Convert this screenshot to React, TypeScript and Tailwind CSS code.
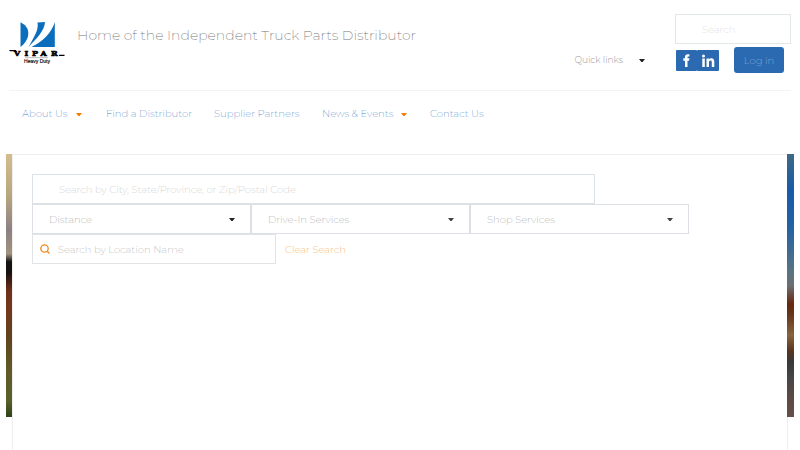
import React, { useState } from 'react';

const navItems = [
  { label: 'About Us', width: 'w-[60px]', menu: true },
  { label: 'Find a Distributor', width: 'w-[84px]', menu: false },
  { label: 'Supplier Partners', width: 'w-[84px]', menu: false },
  { label: 'News & Events', width: 'w-[84px]', menu: true },
  { label: 'Contact Us', width: 'w-[60px]', menu: false },
];

const Caret = ({ className }: { className?: string }) => (
  <svg viewBox="0 0 6 3" className={`shrink-0 w-[6px] h-[3px] ${className ?? ''}`} fill="currentColor" aria-hidden="true">
    <path d="M0 0h6L3.600 3H2.400z" />
  </svg>
);

const Logo = () => (
  <svg viewBox="0 0 56 42" className="w-14 h-[42px] block" role="img" aria-label="VIPAR Heavy Duty">
    <path d="M11.500 0.200C16 2.500 19.300 6 19.300 11C19.300 16.500 16.500 21 11.500 25z" fill="#0a6ebd" />
    <path d="M36 0C35.500 9 27.500 16.500 19.500 25C25 15 30 8 28.500 0.500z" fill="#0a6ebd" />
    <path d="M45.800 0V25H22.500C34 19.500 42.500 11 45.800 0z" fill="#0a6ebd" />
    <text x="5 15.500 23 31.500 42" y="34" fontFamily="'DejaVu Serif', 'Liberation Serif', serif" fontWeight="700" fontSize="8" stroke="#000" strokeWidth="0.700">
      VIPAR
    </text>
    {/* slab serifs that run past the lettering */}
    <path d="M0 28h7v1.300H1zM50 32.800h5.500v1.300H50z" fill="#000" />
    <path d="M16 35.600h23v0.500H16z" fill="#777" />
    <text x="28" y="41" textAnchor="middle" fontFamily="'Liberation Sans', sans-serif" fontSize="5" stroke="#000" strokeWidth="0.150">
      Heavy Duty
    </text>
  </svg>
);

interface DropdownProps {
  id: string;
  label: string;
  options: string[];
  caret: string;
}

const Dropdown = ({ id, label, options, caret }: DropdownProps) => (
  <div className="relative w-[219px]">
    <select
      id={id}
      aria-label={label}
      defaultValue=""
      className="appearance-none w-full h-[30px] border border-[#dcdfe3] bg-white px-4 text-[10px] font-extralight text-[#999]"
    >
      <option value="">{label}</option>
      {options.map((option) => (
        <option key={option}>{option}</option>
      ))}
    </select>
    <Caret className={`absolute right-4 top-[14px] pointer-events-none ${caret}`} />
  </div>
);

const Header = () => (
  <header className="mx-[9px] border-b border-[#f3f3f3] h-[91px] flex pt-[14px]">
    <a href="#" className="mt-2">
      <Logo />
    </a>
    <p className="ml-3 mt-[11px] text-[14px] leading-5 font-extralight text-[#777] whitespace-nowrap">
      Home of the Independent Truck Parts Distributor
    </p>
    <div className="ml-auto flex flex-col items-end">
      <input
        type="search"
        aria-label="Search"
        placeholder="Search"
        className="w-[116px] h-[30px] border border-[#e2e7e9] px-[26px] text-[10px] font-extralight placeholder:text-[#d4d4d4]"
      />
      <div className="flex items-center mt-[3px] pr-[7px]">
        <button type="button" className="flex items-center gap-4 mr-[31px] text-[9px] font-light text-[#999] whitespace-nowrap">
          Quick links
          <Caret className="text-[#222]" />
        </button>
        <a href="#" aria-label="Facebook">
          <svg viewBox="0 0 21 21" className="w-[21px] h-[21px]">
            <rect width="21" height="21" rx="1" fill="#2b69b1" />
            <path d="M9 17v-6.300H7.300V8.200H9V6.900C9 5 10 4.200 11.700 4.200h1.700v2.300h-1c-.7 0-.9.3-.9.900v.8h1.900l-.3 2.500h-1.600V17z" fill="#fff" />
          </svg>
        </a>
        <a href="#" aria-label="LinkedIn">
          <svg viewBox="0 0 22 21" className="w-[22px] h-[21px]">
            <rect width="22" height="21" rx="1" fill="#2b69b1" />
            <circle cx="6.500" cy="6" r="1.500" fill="#fff" />
            <path d="M5.300 8.500h2.500V17H5.300zM9.500 8.500h2.400v1.200c.5-.9 1.400-1.400 2.500-1.400 2 0 2.900 1.300 2.900 3.500V17h-2.500v-4.700c0-1.200-.4-1.800-1.300-1.800s-1.500.7-1.500 1.900V17H9.500z" fill="#fff" />
          </svg>
        </a>
        <button type="button" className="ml-[15px] w-[50px] h-[26px] rounded-[3px] bg-[#2b69b1] text-[10px] font-extralight text-[#a5c0df]">
          Log in
        </button>
      </div>
    </div>
  </header>
);

const NavBar = () => (
  <nav className="h-[63px] pt-[15px] pl-[22px]">
    <ul className="flex gap-6">
      {navItems.map((item) => (
        <li key={item.label} className={item.width}>
          <a href="#" className="flex items-center gap-2 text-[10px] leading-4 font-extralight text-[#4a84c8] whitespace-nowrap">
            {item.label}
            {item.menu && <Caret className="text-[#f57c00]" />}
          </a>
        </li>
      ))}
    </ul>
  </nav>
);

const LocatorForm = () => {
  const [place, setPlace] = useState('');
  const [locationName, setLocationName] = useState('');

  const clearSearch = () => {
    setPlace('');
    setLocationName('');
  };

  return (
    <form className="pl-[19px] pt-[19px]" onSubmit={(e) => e.preventDefault()}>
      <input
        type="text"
        aria-label="City, State/Province, or Zip/Postal Code"
        value={place}
        onChange={(e) => setPlace(e.target.value)}
        placeholder="Search by City, State/Province, or Zip/Postal Code"
        className="block w-[563px] h-[30px] border border-[#dce1e5] px-[26px] text-[10px] font-extralight placeholder:text-[#c4c4c4]"
      />
      <div className="flex">
        <Dropdown id="distance" label="Distance" options={['25 miles', '50 miles', '100 miles']} caret="text-[#222]" />
        <Dropdown id="drive-in" label="Drive-In Services" options={['Alignment', 'Brakes']} caret="text-[#444]" />
        <Dropdown id="shop" label="Shop Services" options={['Machine Shop', 'Driveline']} caret="text-[#444]" />
      </div>
      <div className="flex items-center gap-[9px]">
        <div className="relative w-[244px]">
          <input
            type="text"
            aria-label="Location Name"
            value={locationName}
            onChange={(e) => setLocationName(e.target.value)}
            placeholder="Search by Location Name"
            className="block w-full h-[30px] border border-[#e0e4e6] px-[25px] text-[10px] font-extralight placeholder:text-[#aaa]"
          />
          <svg viewBox="0 0 10 10" className="absolute left-2 top-[10px] w-[10px] h-[10px]" fill="none" stroke="#f08a24" strokeWidth="1.300" aria-hidden="true">
            <circle cx="4.500" cy="4.500" r="3.700" />
            <path d="M7.200 7.200L9.500 9.500" />
          </svg>
        </div>
        <button type="button" onClick={clearSearch} className="text-[10px] font-extralight text-[#f8983a]">
          Clear Search
        </button>
      </div>
    </form>
  );
};

const App = () => {
  return (
    <div className="min-h-screen flex flex-col bg-white font-['Montserrat','Inter',sans-serif]">
      <Header />
      <NavBar />
      <main className="flex-1 flex px-[6px]">
        <div className="w-[7px] h-[263px] bg-[linear-gradient(to_bottom,#d3bd8d_0%,#b7a67f_16%,#8d8083_29%,#a0937c_38%,#151313_41%,#18100f_45%,#6c301c_52%,#75361b_58%,#60431e_70%,#605b27_83%,#58602b_94%,#2f421b_100%)]" />
        <div className="flex-1 -ml-px -mr-px border-x border-t border-[#eee]">
          <LocatorForm />
        </div>
        <div className="w-[7px] h-[263px] bg-[linear-gradient(to_bottom,#3f6986_0%,#185ba9_14%,#2462a4_28%,#5a7380_45%,#6b7073_50%,#672810_57%,#66351d_61%,#85653f_69%,#57351f_75%,#393939_79%,#474646_85%,#5d4a43_93%,#63504a_100%)]" />
      </main>
    </div>
  );
};

export default App;
